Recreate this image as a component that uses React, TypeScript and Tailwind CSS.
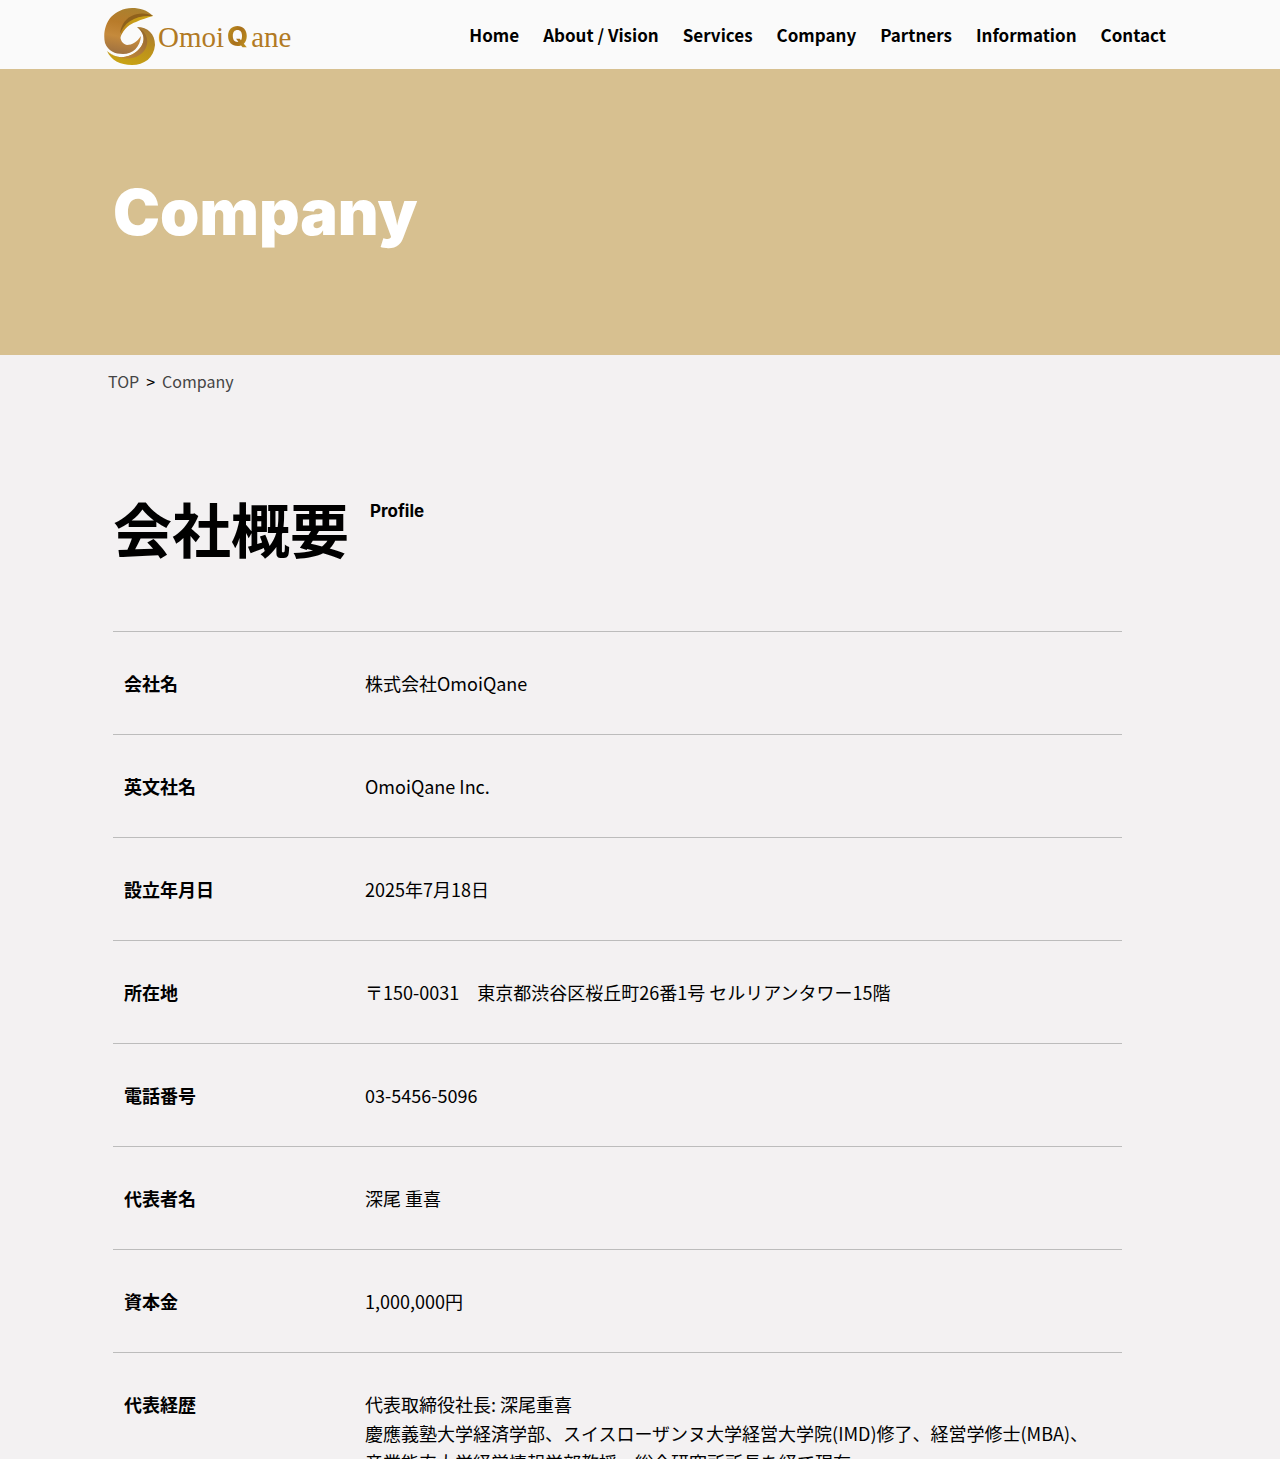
const navItems = [
  { label: 'Home', href: '#home' },
  { label: 'About / Vision', href: '#about' },
  { label: 'Services', href: '#services' },
  { label: 'Company', href: '#company' },
  { label: 'Partners', href: '#partners' },
  { label: 'Information', href: '#information' },
  { label: 'Contact', href: '#contact' },
];

const profileRows = [
  { label: '会社名', lines: ['株式会社OmoiQane'] },
  { label: '英文社名', lines: ['OmoiQane Inc.'] },
  { label: '設立年月日', lines: ['2025年7月18日'] },
  { label: '所在地', lines: ['〒150-0031　東京都渋谷区桜丘町26番1号 セルリアンタワー15階'] },
  { label: '電話番号', lines: ['03-5456-5096'] },
  { label: '代表者名', lines: ['深尾 重喜'] },
  { label: '資本金', lines: ['1,000,000円'] },
  {
    label: '代表経歴',
    lines: [
      '代表取締役社長: 深尾重喜',
      '慶應義塾大学経済学部、スイスローザンヌ大学経営大学院(IMD)修了、経営学修士(MBA)、',
      '産業能率大学経営情報学部教授、総合研究所所長を経て現在',
    ],
  },
];

function LogoMark() {
  return (
    <svg className="h-[58px] w-[52px] shrink-0" viewBox="0 0 52 58" aria-hidden="true">
      <defs>
        <linearGradient id="mark-left" x1="0.6" y1="0" x2="0.4" y2="1">
          <stop offset="0" stopColor="#a9812f" />
          <stop offset="0.35" stopColor="#b87b2a" />
          <stop offset="0.65" stopColor="#c58a3c" />
          <stop offset="1" stopColor="#a07240" />
        </linearGradient>
        <linearGradient id="mark-fold" x1="0" y1="1" x2="1" y2="0">
          <stop offset="0" stopColor="#b5781f" />
          <stop offset="0.5" stopColor="#c69a18" />
          <stop offset="1" stopColor="#cda51a" />
        </linearGradient>
        <linearGradient id="mark-right" x1="0.7" y1="0" x2="0.3" y2="1">
          <stop offset="0" stopColor="#a87a34" />
          <stop offset="0.5" stopColor="#bd921a" />
          <stop offset="1" stopColor="#c9a414" />
        </linearGradient>
        <linearGradient id="mark-inner" x1="1" y1="0" x2="0" y2="1">
          <stop offset="0" stopColor="#8f6428" />
          <stop offset="0.5" stopColor="#b07b3c" />
          <stop offset="1" stopColor="#c9922a" />
        </linearGradient>
      </defs>
      <path
        d="M49 8C43 2 36 0 28 0C19 0 12 4 7 9C1 16-1 26 1 35C4 43 11 46 19 46C29 46 36 39 37 28C33 34 28 37 23 37C17 36 15 29 17 23C21 14 34 8 49 8Z"
        fill="url(#mark-left)"
      />
      <path d="M49 8C39 4 26 7 20 16C17 20 16 25 16 30C20 20 26 16 32 14C38 11 43 10 49 8Z" fill="url(#mark-fold)" />
      <path d="M49 8C38 3 25 6 19 16C17 20 16 23 16 26C20 15 30 7 49 8Z" fill="#8f611c" />
      <path
        d="M33 19C44 19 51 26 51 37C50 50 40 57 28 57C16 57 7 52 3 43C11 51 23 51 32 44C41 37 43 27 33 19Z"
        fill="url(#mark-right)"
      />
      <path d="M33 19C44 24 46 35 40 43C32 53 15 53 3 43C11 51 23 51 32 44C41 37 43 27 33 19Z" fill="url(#mark-inner)" />
    </svg>
  );
}

function Header() {
  return (
    <header className="flex h-[69px] items-center justify-between bg-[#fafafa] pr-[114px] pl-[104px]">
      <a
        href="#home"
        aria-label="OmoiQane"
        className="flex items-center gap-[2px] pt-[5px] font-['Liberation_Serif',serif] text-[29px] leading-[58px] text-[#b27a24]"
      >
        <LogoMark />
        <span>Omoi</span>
        <span className="bg-linear-to-br from-[#cda51a] via-[#a8701c] to-[#d1ac1c] bg-clip-text px-px font-['Inter',sans-serif] text-[27px] font-extrabold text-transparent">
          Q
        </span>
        <span>ane</span>
      </a>
      <nav aria-label="Main">
        <ul className="flex gap-6 text-[17px] leading-[28px] font-bold whitespace-nowrap">
          {navItems.map((item) => (
            <li key={item.label}>
              <a href={item.href}>{item.label}</a>
            </li>
          ))}
        </ul>
      </nav>
    </header>
  );
}

function Breadcrumb() {
  return (
    <nav aria-label="Breadcrumb" className="pt-[14px] pl-[108px] text-[#444]">
      <ol className="flex items-center gap-[7px] text-[16px] leading-[24px]">
        <li>
          <a href="#home">TOP</a>
        </li>
        <li aria-hidden="true" className="text-black">
          &gt;
        </li>
        <li aria-current="page">Company</li>
      </ol>
    </nav>
  );
}

function ProfileTable() {
  return (
    <table className="w-full border-t border-[#bcbcbc] text-left text-[18px] leading-[29px]">
      <tbody>
        {profileRows.map((row) => (
          <tr key={row.label} className="border-b border-[#bcbcbc] align-top">
            <th scope="row" className="w-[241px] pt-[37px] pb-[36px] pl-[11px] font-bold">
              {row.label}
            </th>
            <td className="pt-[37px] pb-[36px] pl-[11px]">
              {row.lines.map((line) => (
                <p key={line}>{line}</p>
              ))}
            </td>
          </tr>
        ))}
      </tbody>
    </table>
  );
}

export default function App() {
  return (
    <div className="h-screen overflow-hidden bg-[#a98467]">
      <div className="min-h-screen rounded-bl-[12px] bg-[#f3f1f2] font-['Noto_Sans_CJK_JP',sans-serif] text-black">
        <Header />
        <div className="flex h-[286px] items-center bg-[#d7c090] px-[113px]">
          <h1 className="font-['Inter',sans-serif] text-[63px] leading-[72px] font-black text-white">Company</h1>
        </div>
        <Breadcrumb />
        <main className="pt-[91px] pr-[158px] pl-[113px]">
          <div className="flex items-start gap-[21px] pb-[59px]">
            <h2 className="text-[59px] leading-[88px] font-bold">会社概要</h2>
            <p className="pt-[15px] font-['Inter',sans-serif] text-[17px] leading-[24px] font-bold">Profile</p>
          </div>
          <ProfileTable />
        </main>
      </div>
    </div>
  );
}
